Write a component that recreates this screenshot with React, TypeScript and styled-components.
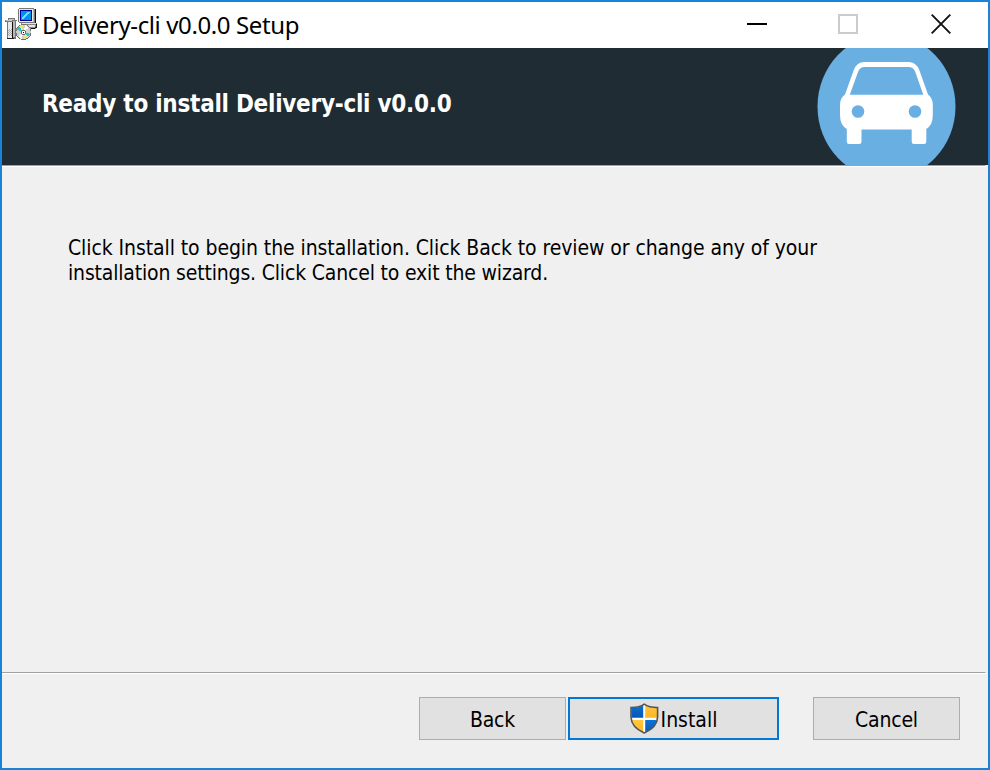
import React from "react";
import styled, { createGlobalStyle } from "styled-components";

const GlobalStyle = createGlobalStyle`
  * { box-sizing: border-box; }
  html, body { margin: 0; padding: 0; overflow: hidden; }
`;

const Window = styled.div`
  width: 990px;
  height: 770px;
  display: flex;
  flex-direction: column;
  border: 2px solid #1883d7;
  background: #f0f0f0;
  color: #000;
  font-family: "DejaVu Sans Condensed", "DejaVu Sans", sans-serif;
  font-stretch: condensed;
  font-size: 21px;
`;

const TitleBar = styled.header`
  height: 46px;
  flex: none;
  display: flex;
  align-items: center;
  padding: 0 1px 2px 3px;
  background: #fff;
`;

const Title = styled.span`
  flex: 1;
  padding: 2px 0 0 5px;
  font-family: "Noto Sans", sans-serif;
  font-stretch: normal;
  font-size: 24px;
  line-height: 32px;
  letter-spacing: -0.38px;
  white-space: pre;
`;

const Controls = styled.div`
  display: flex;
`;

const Control = styled.button<{ $shift?: number }>`
  width: 92px;
  height: 44px;
  padding: 0 ${(p) => p.$shift ?? 0}px 0 0;
  border: 0;
  background: none;
  display: flex;
  align-items: center;
  justify-content: center;
`;

const Banner = styled.section`
  height: 117px;
  flex: none;
  display: flex;
  justify-content: space-between;
  align-items: flex-start;
  overflow: hidden;
  background: #202c34;
`;

const Heading = styled.h1`
  margin: 42px 0 0 40px;
  color: #fff;
  font-size: 24px;
  font-weight: 700;
  line-height: 28px;
  letter-spacing: -0.26px;
  white-space: pre;
`;

const Divider = styled.div`
  height: 2px;
  width: 984px;
  flex: none;
  border-top: 1px solid #a0a0a0;
  border-right: 1px solid #fff;
  border-bottom: 1px solid #fff;
`;

const Body = styled.main`
  flex: 1;
  padding: 69px 66px 0;
`;

const Line = styled.div<{ $track: number }>`
  line-height: 25px;
  letter-spacing: ${(p) => p.$track}px;
  white-space: pre;
`;

const Footer = styled.footer`
  height: 94px;
  flex: none;
  display: flex;
  justify-content: flex-end;
  padding: 23px 28px 0 0;
`;

const Button = styled.button<{ $primary?: boolean }>`
  width: ${(p) => (p.$primary ? 211 : 147)}px;
  height: 43px;
  margin-left: ${(p) => (p.$primary ? 2 : 0)}px;
  margin-right: ${(p) => (p.$primary ? 34 : 0)}px;
  padding: 0;
  display: flex;
  align-items: center;
  justify-content: center;
  gap: 2px;
  border: ${(p) => (p.$primary ? "2px solid #0078d7" : "1px solid #adadad")};
  background: #e1e1e1;
  color: #000;
  font: inherit;
  line-height: 25px;
  letter-spacing: -0.2px;
`;

const Label = styled.span<{ $track?: number }>`
  padding-top: 4px;
  letter-spacing: ${(p) => p.$track ?? -0.2}px;
`;

const InstallerIcon = () => (
  <svg width="32" height="32" viewBox="0 0 32 32" shapeRendering="crispEdges">
    <path d="M14 0H29V1H30V15H14V14H13V1H14Z" fill="#777" />
    <path d="M14 1H28V14H14Z" fill="#e8e8e8" />
    <path d="M28 1H29V14H28Z" fill="#b8b8b8" />
    <path d="M30 1H31V15H30Z" fill="#111" />
    <path d="M15 2H27V13H15Z" fill="#000090" />
    <path d="M16 3H26V12H16Z" fill="#0090f0" />
    <path d="M17 11V9H18V8H19V7H20V6H21V5H22V4H25V5H24V6H23V7H22V8H21V9H20V10H19V11Z" fill="#70dcf8" />
    <path d="M16 15H32V20H31V21H24V18H16Z" fill="#888" />
    <path d="M17 15H31V16H17ZM20 17H30V19H20Z" fill="#e4e4e4" />
    <path d="M31 16H32V20H30V21H26V20H30V19H31Z" fill="#111" />
    <path d="M0 12H3V10H10V12H12V13H11V31H2V14H0Z" fill="#777" />
    <path d="M1 12H4V11H9V12H7V13H1Z" fill="#c8c8c8" />
    <path d="M3 14H7V30H3Z" fill="#e8e8e8" />
    <path d="M7 14H8V30H7Z" fill="#111" />
    <path d="M8 13H10V29H8Z" fill="#b8b8b8" />
    <path d="M2 30H9V31H2Z" fill="#222" />
    <path d="M4 21H5V22H4ZM6 21H7V22H6ZM3 22H4V23H3ZM5 22H6V23H5ZM4 23H5V24H4ZM6 23H7V24H6ZM3 24H4V25H3ZM5 24H6V25H5ZM4 25H5V26H4ZM6 25H7V26H6ZM3 26H4V27H3ZM5 26H6V27H5ZM4 27H5V28H4ZM6 27H7V28H6Z" fill="#aaa" />
    <circle cx="18.5" cy="24" r="8" fill="#707070" />
    <circle cx="18.5" cy="24" r="7.2" fill="#d0d0d0" />
    <path d="M18 24L14 18L18 17Z" fill="#ece47c" />
    <path d="M18 24L11.5 21.5L14 18Z" fill="#28c4cc" />
    <path d="M19 24L25.5 26L23 29Z" fill="#28c4cc" />
    <path d="M19 25L23 29L19 31Z" fill="#ece47c" />
    <path d="M19 23L20 17L24 20Z" fill="#fff" />
    <path d="M18 25L17 31L13 28Z" fill="#f4f4f4" />
    <path d="M17 22H20V23H21V26H20V27H17V26H16V23H17Z" fill="#666" />
    <path d="M17 23H20V26H17Z" fill="#fff" />
    <path d="M18 24H19V25H18Z" fill="#000" />
  </svg>
);

const CarLogo = () => (
  <svg width="171" height="117" viewBox="817 48 171 117">
    <ellipse cx="886.5" cy="106.5" rx="69" ry="72.5" fill="#6aafe1" />
    <path
      fill="#fff"
      fillRule="evenodd"
      d="M864 62H908.5Q916 62 919.3 70L928 94.5Q932.8 98 932.8 105V115Q932.8 125 926.3 129V141.5Q926.3 144 924 144H914Q911.7 144 911.7 141.5V129.5H861.5V141.5Q861.5 144 859 144H849Q846.8 144 846.8 141.5V129Q840 125 840 115V105Q840 98 845 94.5L853.8 70Q857 62 864 62ZM864.5 67Q859.8 67 858 72L849.8 94.8H923.3L915.3 72Q913.5 67 908.5 67Z"
    />
    <circle cx="858" cy="111.5" r="6.3" fill="#6aafe1" />
    <circle cx="915" cy="111.5" r="6.3" fill="#6aafe1" />
  </svg>
);

const ShieldIcon = () => (
  <svg width="29" height="31" viewBox="0 0 29 31">
    <defs>
      <clipPath id="shield">
        <path d="M14.3 1.5C11 4 6 5 1.4 5V14C1.6 22 7 26.5 14.3 29.6C21.6 26.5 27 22 27.2 14V5C22.5 5 17.5 4 14.3 1.5Z" />
      </clipPath>
      <linearGradient id="blue" x2="0" y2="1">
        <stop stopColor="#0a74d8" />
        <stop offset="1" stopColor="#0856b4" />
      </linearGradient>
      <linearGradient id="gold" x2="0" y2="1">
        <stop stopColor="#ffc83a" />
        <stop offset="1" stopColor="#fdb62c" />
      </linearGradient>
    </defs>
    <g clipPath="url(#shield)">
      <path d="M0 0H29V31H0Z" fill="#fff" />
      <path d="M0 0H13.2V14.8H0Z" fill="url(#blue)" />
      <path d="M15.2 0H29V14.8H15.2Z" fill="url(#gold)" />
      <path d="M0 17H13.2V31H0Z" fill="url(#gold)" />
      <path d="M15.2 17H29V31H15.2Z" fill="url(#blue)" />
    </g>
    <path
      d="M14.3 1.2C11 3.6 6 4.6 1 4.6V14C1.2 22 7 26.8 14.3 30C21.6 26.8 27.4 22 27.6 14V4.6C22.5 4.6 17.5 3.6 14.3 1.2Z"
      fill="none"
      stroke="#50565a"
      strokeWidth="1.6"
    />
  </svg>
);

export default function App() {
  return (
    <>
      <GlobalStyle />
      <Window>
        <TitleBar>
          <InstallerIcon />
          <Title>Delivery-cli v0.0.0 Setup</Title>
          <Controls>
            <Control aria-label="Minimize">
              <svg width="20" height="20"><path d="M0 9H20V11H0Z" /></svg>
            </Control>
            <Control aria-label="Maximize" disabled $shift={2}>
              <svg width="20" height="20"><rect x="1" y="1" width="18" height="18" fill="none" stroke="#ccc" strokeWidth="2" /></svg>
            </Control>
            <Control aria-label="Close">
              <svg width="20" height="20"><path d="M.7 .7L19.3 19.3M19.3 .7L.7 19.3" stroke="#111" strokeWidth="1.9" /></svg>
            </Control>
          </Controls>
        </TitleBar>
        <Banner>
          <Heading>Ready to install Delivery-cli v0.0.0</Heading>
          <CarLogo />
        </Banner>
        <Divider />
        <Body>
          <Line $track={-0.08}>Click Install to begin the installation. Click Back to review or change any of your</Line>
          <Line $track={-0.17}>installation settings. Click Cancel to exit the wizard.</Line>
        </Body>
        <Divider />
        <Footer>
          <Button><Label>Back</Label></Button>
          <Button $primary>
            <ShieldIcon />
            <Label $track={0}>Install</Label>
          </Button>
          <Button><Label>Cancel</Label></Button>
        </Footer>
      </Window>
    </>
  );
}
